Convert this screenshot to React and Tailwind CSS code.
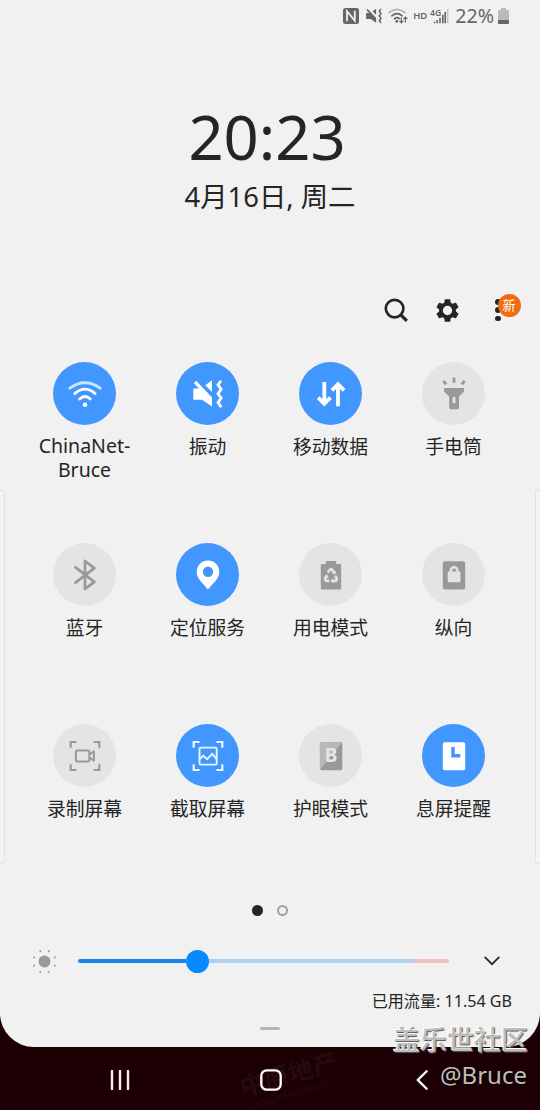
import React, { useState } from 'react';
import { clsx } from 'clsx';

const WifiIcon = () => (
  <g fill="none" stroke="#fff" strokeWidth="2.8" strokeLinecap="round">
    <path d="M2.8 12.2Q18 1.4 33.2 12.2" stroke="#cbe5ff" />
    <path d="M7.8 17.6Q18 8.6 28.2 17.6" />
    <path d="M12.7 23Q18 18 23.3 23" />
    <circle cx="18" cy="28.8" r="2.3" fill="#fff" stroke="none" />
  </g>
);

const VibrateIcon = () => (
  <g fill="currentColor">
    <path d="M3.3 12.4H9L3.8 7.2 6.2 4.8 22 21.6V30.6L12 23.8H3.3Z" />
    <path d="M15.3 9.3 22 4.3V16Z" />
    <path d="M31 4.7 28 8.9 31.2 13.3 28 17.7 31.2 22.1 28 26.6 31.2 31.2" fill="none" stroke="currentColor" strokeWidth="2.8" />
  </g>
);

const DataIcon = () => (
  <g fill="none" stroke="#fff" strokeWidth="3.8">
    <path d="M11.3 6V28M5.2 21.6 11.3 27.7 17.4 21.6" />
    <path d="M25 30.2V8M18.9 14.3 25 8.2 31.1 14.3" />
  </g>
);

const TorchIcon = () => (
  <g fill="#999">
    <path d="M8 12H28V15.5L23 20.5V31.5Q23 33.2 21.3 33.2H14.9Q13.2 33.2 13.2 31.5V20.5L8 15.5Z" />
    <rect x="16.6" y="21" width="2.8" height="6.2" fill="#e4e4e4" />
    <path d="M18 1.6V6.8M7.2 5 10.3 8.4M28.8 5 25.7 8.4" stroke="#999" strokeWidth="2.8" />
  </g>
);

const BluetoothIcon = () => (
  <path d="M8.5 10.3 27.3 24.8 18 32V4L27.3 11.2 8.5 25.7" fill="none" stroke="#999" strokeWidth="2.8" strokeLinecap="round" strokeLinejoin="round" />
);

const PinIcon = () => (
  <path fill="#fff" fillRule="evenodd" d="M18 3.4A11.3 11.3 0 0 0 6.7 14.7C6.7 22 13 26 18 32.4 23 26 29.3 22 29.3 14.7A11.3 11.3 0 0 0 18 3.4ZM18 9.5A5.2 5.2 0 1 1 18 19.9 5.2 5.2 0 0 1 18 9.5Z" />
);

const PowerIcon = () => (
  <>
    <path fill="#999" d="M12.8 7V4.8Q12.8 4 13.6 4H22.4Q23.2 4 23.2 4.8V7H27Q28.2 7 28.2 8.2V31.2Q28.2 32.4 27 32.4H9Q7.8 32.4 7.8 31.2V8.2Q7.8 7 9 7Z" />
    <g fill="none" stroke="#e4e4e4" strokeWidth="2.6" strokeLinejoin="round">
      <path d="M14.8 15.6 17.2 12.2H18.8L21.2 15.8" />
      <path d="M22.2 18.6 24 21.8 23 23.9H19.6" />
      <path d="M16.4 23.9H13L12 21.8 13.8 18.6" />
    </g>
    <path fill="#e4e4e4" d="M22.8 13.6 22.4 17.6 18.8 16.2ZM20.2 21.2V26.6L17.4 23.9ZM10.8 19.2 14.4 17.4 15.6 21.2Z" />
  </>
);

const PortraitLockIcon = () => (
  <>
    <rect x="6.8" y="4.3" width="22.4" height="28.2" rx="2" fill="#999" />
    <rect x="11.7" y="14.5" width="12.8" height="10.8" rx="1.2" fill="#e4e4e4" />
    <path d="M14.8 15V13.5A3.3 3.3 0 0 1 21.4 13.5V15" fill="none" stroke="#e4e4e4" strokeWidth="2.4" />
  </>
);

const Corners = ({ color }) => (
  <path d="M3.7 9.8V4H9.6M26.4 4H32.3V9.8M32.3 26.2V32H26.4M9.6 32H3.7V26.2" fill="none" stroke={color} strokeWidth="2.2" />
);

const RecordIcon = () => (
  <>
    <Corners color="#999" />
    <g fill="none" stroke="#999" strokeWidth="2" strokeLinejoin="round">
      <rect x="8.9" y="12.6" width="13.4" height="10.9" rx="1.2" />
      <path d="M22.5 16.5 26.9 13.3V22.8L22.5 19.6" />
    </g>
  </>
);

const ScreenshotIcon = () => (
  <>
    <Corners color="#e9f8ff" />
    <g fill="none" stroke="#e9f8ff" strokeWidth="1.9" strokeLinejoin="round">
      <rect x="9.5" y="9.6" width="17.2" height="17" rx="1.4" />
      <path d="M10 21.2 13.2 17.6 17.2 21.2 22.2 15.8 26.5 20.8" />
    </g>
  </>
);

const EyeIcon = () => (
  <>
    <rect x="6.9" y="4.2" width="22.4" height="28" rx="2" fill="#999" />
    <path d="M8.9 4.2H29L7.2 31.6Q6.9 31 6.9 30.2V6.2Q6.9 4.2 8.9 4.2Z" fill="#b8b8b8" />
    <text x="18.1" y="24.4" textAnchor="middle" fill="#e6e6e6" fontSize="19" fontWeight="700" fontFamily="Noto Sans, sans-serif">B</text>
  </>
);

const ClockIcon = () => (
  <>
    <rect x="6.8" y="4.2" width="22.4" height="28" rx="2" fill="#fff" />
    <path d="M17 9V17.8H24.4" fill="none" stroke="#4297ff" strokeWidth="3.4" />
  </>
);

const TILES = [
  { label: 'ChinaNet-Bruce', icon: WifiIcon, on: true, latin: true },
  { label: '振动', icon: VibrateIcon, on: true },
  { label: '移动数据', icon: DataIcon, on: true },
  { label: '手电筒', icon: TorchIcon, on: false },
  { label: '蓝牙', icon: BluetoothIcon, on: false },
  { label: '定位服务', icon: PinIcon, on: true },
  { label: '用电模式', icon: PowerIcon, on: false },
  { label: '纵向', icon: PortraitLockIcon, on: false },
  { label: '录制屏幕', icon: RecordIcon, on: false },
  { label: '截取屏幕', icon: ScreenshotIcon, on: true },
  { label: '护眼模式', icon: EyeIcon, on: false },
  { label: '息屏提醒', icon: ClockIcon, on: true },
];

const Tile = ({ label, icon: Icon, on, latin, onToggle }) => (
  <div className="flex flex-col items-center">
    <button
      onClick={onToggle}
      className={clsx('flex size-[63px] items-center justify-center rounded-full text-white', on ? 'bg-[#4297ff]' : 'bg-[#e4e4e4]')}
    >
      <svg viewBox="0 0 36 36" className="size-9"><Icon /></svg>
    </button>
    <span className={clsx('w-[104px] text-center leading-6', latin ? 'mt-[9px] text-[19.5px]' : 'mt-[10px] text-[18.8px]')}>
      {label}
    </span>
  </div>
);

const StatusBar = () => (
  <div className="flex h-8 items-center justify-end pr-[31px] text-[#666]">
    <svg viewBox="0 0 16 16" className="mr-[7px] size-4">
      <rect width="16" height="16" rx="2.5" fill="#666" />
      <path d="M4 13.2V3.2L11.8 12.8V2.8" fill="none" stroke="#f1f1f1" strokeWidth="1.8" />
    </svg>
    <svg viewBox="3 4 30 28" className="mr-[6px] size-4">
      <VibrateIcon />
    </svg>
    <svg viewBox="0 0 20 16" className="mr-[5px] h-4 w-5" fill="none" stroke="#666" strokeWidth="1.6" strokeLinecap="round">
      <path d="M1 4.6Q9 -2 17 4.6" stroke="#b0b0b0" />
      <path d="M3.8 7.8Q9 3.4 14.2 7.8M6.4 10.8Q9 8.6 11.4 10.6" />
      <circle cx="8.8" cy="13.2" r=".7" fill="#666" />
      <path d="M13.4 9.8V14.6M11.8 13.2 13.4 14.8 15 13.2M17.4 14V9.2M15.8 10.6 17.4 9 19 10.6" strokeWidth="1.2" />
    </svg>
    <span className="mr-[3px] text-[9.5px] leading-3 font-semibold">HD</span>
    <svg viewBox="0 0 19 17" className="mr-[6px] h-[17px] w-[19px] overflow-visible">
      <text x="0" y="7.6" fontSize="8.6" fontWeight="600" fill="#666">4G</text>
      <path d="M4.6 13.8V15.2M7.2 12V15.2M10 9.8V15.2M12.8 6.8V15.2M15.2 4V15.2" stroke="#666" strokeWidth="1.6" />
      <path d="M17.6 1V15.2" stroke="#c4c4c4" strokeWidth="1.6" />
    </svg>
    <span className="mr-1 text-[19.6px] leading-7">22%</span>
    <svg viewBox="0 0 11 16" className="h-4 w-[11px]">
      <path d="M3 2V0H8V2H10Q11 2 11 3V12H0V3Q0 2 1 2Z" fill="#bababa" />
      <path d="M0 12H11V15Q11 16 10 16H1Q0 16 0 15Z" fill="#666" />
    </svg>
  </div>
);

const SUN_RAYS = [22, 68, 112, 158, 202, 248, 292, 338];

const Brightness = () => (
  <div className="flex h-6 items-center pl-8">
    <svg viewBox="-12.5 -12.5 25 25" className="size-[25px]" fill="#999">
      <circle r="5.9" />
      {SUN_RAYS.map((a) => (
        <circle key={a} cx="11.2" r="1" transform={`rotate(${a})`} />
      ))}
    </svg>
    <div className="ml-[21px] flex h-6 w-[371px] items-center">
      <div className="h-1 w-[108px] rounded-l-full bg-[#1787ea]" />
      <div className="size-[22.5px] rounded-full bg-[#058bff]" />
      <div className="h-1 flex-1 bg-[#add2f1]" />
      <div className="h-1 w-[35px] rounded-r-full bg-[#f2c1c0]" />
    </div>
    <svg viewBox="0 0 16 10" className="ml-[35px] h-[10px] w-4">
      <path d="M1.2 1.4 8 8.2 14.8 1.4" fill="none" stroke="#252525" strokeWidth="1.7" strokeLinecap="round" />
    </svg>
  </div>
);

const NavBar = () => (
  <div className="relative h-[63px]">
    {/* wallpaper showing through */}
    <div className="absolute top-[11px] left-[240px] -rotate-[16deg] font-bold whitespace-nowrap text-[#260b0e]">
      <div className="text-[25px] leading-[30px]">中原地产</div>
      <div className="text-[8px] leading-3 font-medium">CENTALINE PROPERTY</div>
    </div>
    <div className="relative flex h-full items-center pt-[3px] pl-[110px]">
      <svg viewBox="0 0 20 20" className="size-5">
        <path d="M2 1V19M10 1V19M18 1V19" stroke="#fcecec" strokeWidth="2.4" strokeLinecap="round" />
      </svg>
      <svg viewBox="0 0 22 22" className="ml-[130px] size-[22px]">
        <rect x="1.3" y="1.3" width="19.4" height="19.4" rx="5.5" fill="none" stroke="#fff" strokeWidth="2.3" />
      </svg>
      <svg viewBox="0 0 12 20" className="ml-[134px] h-5 w-3">
        <path d="M10.6 1.3 1.8 10 10.6 18.7" fill="none" stroke="#fff" strokeWidth="2.3" strokeLinecap="round" />
      </svg>
    </div>
  </div>
);

export default function App() {
  const [tiles, setTiles] = useState(TILES);

  const toggle = (index) => {
    setTiles((prev) => prev.map((t, i) => (i === index ? { ...t, on: !t.on } : t)));
  };

  return (
    <div className="relative h-[1110px] w-[540px] overflow-hidden bg-[#1c0003] font-['Noto_Sans','Noto_Sans_CJK_SC',sans-serif] text-[#252525]">
      <div className="relative flex h-[1047px] flex-col overflow-hidden rounded-b-[34px] bg-[#f1f1f1]">
        <StatusBar />

        <div className="flex flex-col items-center pr-[6px] pt-[68px]">
          <div className="text-[61.5px] leading-[72px]">20:23</div>
          <div className="mt-[7px] ml-[6px] text-[27.4px] leading-9">4月16日, 周二</div>
        </div>

        {/* Toolbar */}
        <div className="mt-[81px] flex h-7 items-center pl-[384px]">
          <svg viewBox="0 0 24 24" className="size-6" fill="none" stroke="#252525">
            <circle cx="10.6" cy="10.6" r="8.8" strokeWidth="2.7" />
            <path d="M16.8 16.8 22.8 22.8" strokeWidth="3.2" />
          </svg>
          <svg viewBox="2.2 2.2 19.6 19.6" className="ml-7 size-[23px]" fill="#252525">
            <path d="M19.14 12.94c.04-.3.06-.61.06-.94 0-.32-.02-.64-.07-.94l2.03-1.58c.18-.14.23-.41.12-.61l-1.92-3.32c-.12-.22-.37-.29-.59-.22l-2.39.96c-.5-.38-1.03-.7-1.62-.94L14.4 2.81c-.04-.24-.24-.41-.48-.41h-3.84c-.24 0-.43.17-.47.41L9.25 5.35c-.59.24-1.13.57-1.62.94l-2.39-.96c-.22-.08-.47 0-.59.22L2.74 8.87c-.12.21-.08.47.12.61l2.03 1.58c-.05.3-.09.63-.09.94s.02.64.07.94l-2.03 1.58c-.18.14-.23.41-.12.61l1.92 3.32c.12.22.37.29.59.22l2.39-.96c.5.38 1.03.7 1.62.94l.36 2.54c.05.24.24.41.48.41h3.84c.24 0 .44-.17.47-.41l.36-2.54c.59-.24 1.13-.56 1.62-.94l2.39.96c.22.08.47 0 .59-.22l1.92-3.32c.12-.22.07-.47-.12-.61l-2.01-1.58zM12 16a4 4 0 1 1 0-8 4 4 0 0 1 0 8z" />
          </svg>
          <div className="relative ml-[36px] flex h-[22px] flex-col justify-between">
            <i className="size-[5.5px] rounded-full bg-[#252525]" />
            <i className="size-[5.5px] rounded-full bg-[#252525]" />
            <i className="size-[5.5px] rounded-full bg-[#252525]" />
            <span className="absolute -top-[5.5px] left-[2.5px] flex size-[23px] items-center justify-center rounded-full bg-[#ee6c12] text-[13px] leading-none text-white">新</span>
          </div>
        </div>

        {/* Quick tiles */}
        <div className="mt-[38.4px] ml-[23px] grid w-[492px] auto-rows-[181px] grid-cols-4">
          {tiles.map((tile, i) => (
            <Tile key={tile.label} {...tile} onToggle={() => toggle(i)} />
          ))}
        </div>

        <div className="flex h-[11px] items-center justify-center gap-[13.5px]">
          <i className="size-[11px] rounded-full bg-[#252525]" />
          <i className="size-[11px] rounded-full border-2 border-[#a0a0a0]" />
        </div>

        <div className="mt-[33px]">
          <Brightness />
        </div>

        <div className="mt-[15.6px] pr-7 text-right text-[16.1px] leading-6">已用流量: 11.54 GB</div>
        <div className="mx-auto mt-[14px] h-[3px] w-5 rounded-full bg-[#b5b5b5]" />

        {/* Edge handles */}
        <div className="absolute top-[490px] -left-1 h-[374px] w-[9px] rounded-[3px] border border-[#e2e2e2] bg-[#f3f3f3]" />
        <div className="absolute top-[490px] -right-1 h-[374px] w-[9px] rounded-[3px] border border-[#e2e2e2] bg-[#f3f3f3]" />
      </div>

      <NavBar />

      {/* Forum signature */}
      <div className="absolute right-[12px] bottom-[17px] text-right text-[#bdbdbd]">
        <div className="text-[27px] leading-[34px] font-medium [text-shadow:-1px_-1px_0_#fff,1px_1px_1px_#555]">盖乐世社区</div>
        <div className="mr-px text-[24px] leading-[36px] [text-shadow:1px_1px_1px_#000]">@Bruce</div>
      </div>
    </div>
  );
}
